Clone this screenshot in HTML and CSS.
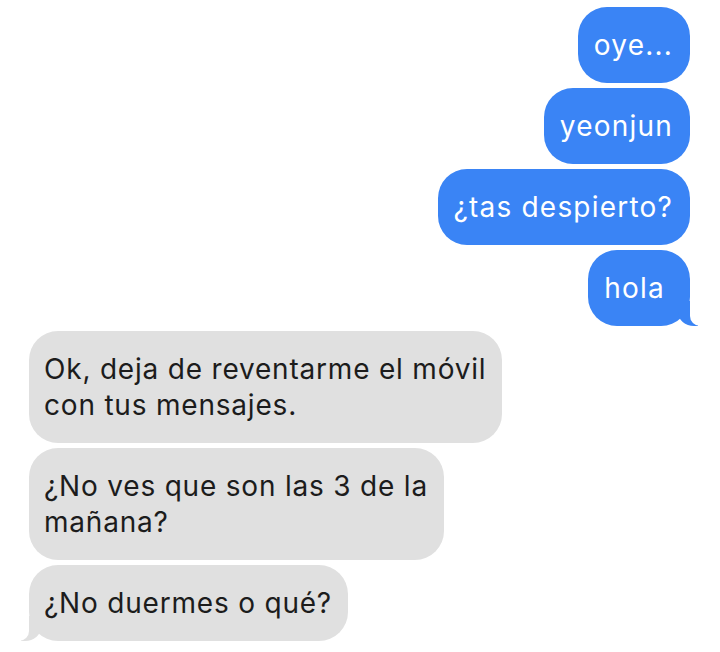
FILE: index.html
```html
<!DOCTYPE html>
<html lang="es">
<head>
    <meta charset="UTF-8">
    <meta name="viewport" content="width=device-width, initial-scale=1.0">
    <title>Mensajes</title>
    <link rel="stylesheet" href="styles.css">
</head>
<body>
    <main class="chat">
        <p class="bubble sent">oye...</p>
        <p class="bubble sent">yeonjun</p>
        <p class="bubble sent">¿tas despierto?</p>
        <p class="bubble sent tail">hola</p>
        <p class="bubble received">Ok, deja de reventarme el móvil<br>con tus mensajes.</p>
        <p class="bubble received">¿No ves que son las 3 de la<br>mañana?</p>
        <p class="bubble received tail">¿No duermes o qué?</p>
    </main>
</body>
</html>
```

FILE: styles.css
```css
body {
    margin: 0;
    background: #fff;
    font-family: Inter, "Noto Sans", sans-serif;
}

.chat {
    display: flex;
    flex-direction: column;
    gap: 5px;
    padding: 7px 30px 0 29px;
}

.bubble {
    position: relative;
    margin: 0;
    padding: 20px 16px 20px 15px;
    border-radius: 29px;
    font-size: 28px;
    line-height: 36px;
    letter-spacing: 0.8px;
    white-space: nowrap;
}

.sent {
    align-self: flex-end;
    padding: 20px 17px 20px 16px;
    background: #3a84f5;
    color: #fff;
    letter-spacing: 1.2px;
}

.sent.tail {
    padding: 20px 25px 20px 16px;
}

.received {
    align-self: flex-start;
    background: #e0e0e0;
    color: #1c1c1c;
}

/* tails on the last bubble of each group */
.tail::before,
.tail::after {
    content: "";
    position: absolute;
    bottom: 0;
    height: 25px;
}

.sent.tail::before {
    right: -8px;
    width: 20px;
    background: #3a84f5;
    border-bottom-left-radius: 16px 14px;
}

.sent.tail::after {
    right: -26px;
    width: 26px;
    background: #fff;
    border-bottom-left-radius: 10px;
}

.received.tail::before {
    left: -8px;
    width: 20px;
    background: #e0e0e0;
    border-bottom-right-radius: 16px 14px;
}

.received.tail::after {
    left: -26px;
    width: 26px;
    background: #fff;
    border-bottom-right-radius: 10px;
}
```
